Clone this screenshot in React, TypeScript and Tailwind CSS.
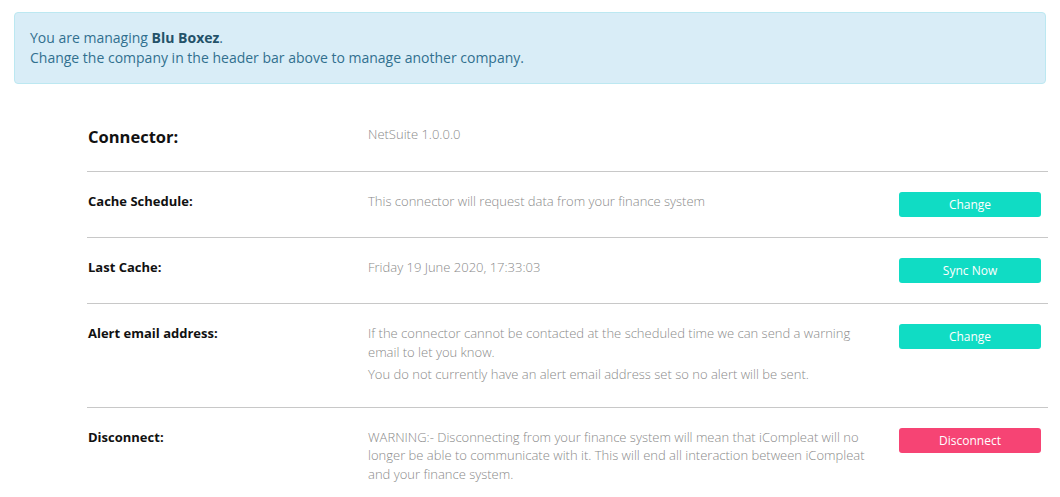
import React from "react";

const font = { fontFamily: '"Open Sans", "Liberation Sans", sans-serif' };

function Row({
  label,
  children,
  button,
  danger,
  last,
}: {
  label: string;
  children: React.ReactNode;
  button?: string;
  danger?: boolean;
  last?: boolean;
}) {
  return (
    <div className={`flex items-start pt-[20px] pb-[20px] ${last ? "" : "border-b border-[#c8c8c8]"}`}>
      <div className="w-[281px] shrink-0 pl-px text-[13px] leading-[18.57px] font-bold text-[#111]">{label}</div>
      <div className="w-[500px] shrink-0 text-[13px] leading-[18.57px] font-light text-[#8a8a8a]">{children}</div>
      <div className="flex-1 flex justify-end pr-[7px]">
        {button && (
          <button
            className={`w-[142px] h-[25px] rounded-[3px] text-white text-[12px] leading-[25px] font-normal ${
              danger ? "bg-[#f64474]" : "bg-[#10dcc4]"
            }`}
          >
            {button}
          </button>
        )}
      </div>
    </div>
  );
}

export default function App() {
  return (
    <div className="w-[1060px] min-h-[497px] bg-white pt-[12px] px-[14px]" style={font}>
      <div className="rounded-[4px] border border-[#bce8f1] bg-[#d9edf7] px-[15px] py-[15px] text-[14px] leading-[20px] text-[#31708f]">
        <div>
          You are managing <b className="font-bold text-[#245269]">Blu Boxez</b>.
        </div>
        <div>Change the company in the header bar above to manage another company.</div>
      </div>
      <div className="ml-[73px] mr-[-2px] mt-[24px]">
        <div className="flex items-start pt-[17px] pb-[22px] border-b border-[#c8c8c8]">
          <div className="w-[281px] shrink-0 pl-px text-[16.5px] leading-[24px] font-bold text-[#111]">Connector:</div>
          <div className="text-[13px] leading-[18.57px] font-light text-[#8a8a8a]">NetSuite 1.0.0.0</div>
        </div>
        <Row label="Cache Schedule:" button="Change">
          <p>This connector will request data from your finance system</p>
        </Row>
        <Row label="Last Cache:" button="Sync Now">
          <p>Friday 19 June 2020, 17:33:03</p>
        </Row>
        <Row label="Alert email address:" button="Change">
          <p className="mb-[4px]">
            If the connector cannot be contacted at the scheduled time we can send a warning email to let you know.
          </p>
          <p className="mb-[3px]">You do not currently have an alert email address set so no alert will be sent.</p>
        </Row>
        <Row label="Disconnect:" button="Disconnect" danger last>
          <p>
            WARNING:- Disconnecting from your finance system will mean that iCompleat will no longer be able to
            communicate with it. This will end all interaction between iCompleat and your finance system.
          </p>
        </Row>
      </div>
    </div>
  );
}
